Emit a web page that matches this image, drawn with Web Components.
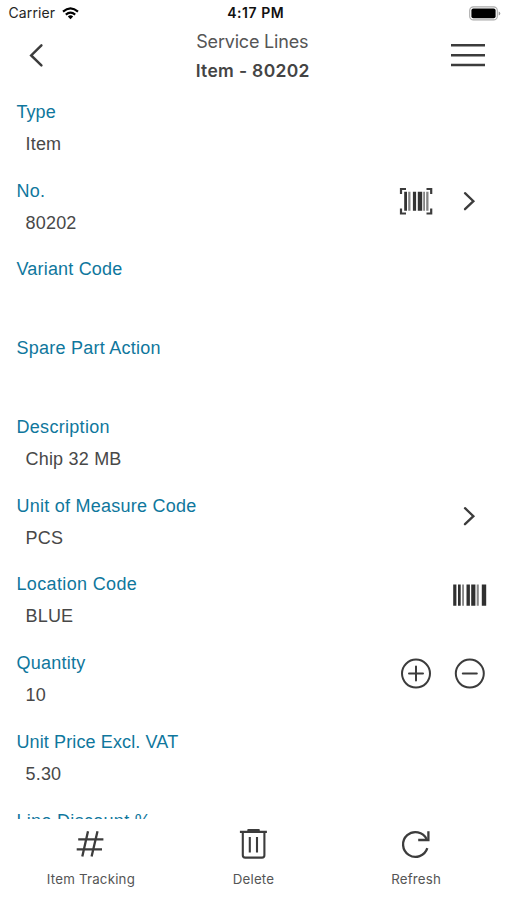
<!DOCTYPE html>
<html lang="en">
<head>
<meta charset="utf-8">
<title>Service Lines</title>
<style>
html,body{margin:0;padding:0;background:#fff}
body{width:507px;height:900px;overflow:hidden;font-family:"Liberation Sans",Arial,sans-serif;color:#454545}
</style>
</head>
<body>
<app-screen>
  <status-bar slot="top"></status-bar>
  <nav-bar slot="top"><span slot="title">Service Lines</span><span slot="subtitle">Item - 80202</span></nav-bar>
  <field-row label="Type" style="--ls:.05px">Item</field-row>
  <field-row label="No.">80202<app-icon slot="actions" name="scan"></app-icon><app-icon slot="actions" name="next"></app-icon></field-row>
  <field-row label="Variant Code" style="--ls:.18px"></field-row>
  <field-row label="Spare Part Action"></field-row>
  <field-row label="Description" style="--ls:.3px">Chip 32 MB</field-row>
  <field-row label="Unit of Measure Code">PCS<app-icon slot="actions" name="next"></app-icon></field-row>
  <field-row label="Location Code" style="--ls:.35px">BLUE<app-icon slot="actions" name="barcode"></app-icon></field-row>
  <field-row label="Quantity">10<app-icon slot="actions" name="plus"></app-icon><app-icon slot="actions" name="minus"></app-icon></field-row>
  <field-row label="Unit Price Excl. VAT" style="--ls:.12px">5.30</field-row>
  <field-row label="Line Discount %" style="--ls:.3px"></field-row>
  <tool-bar slot="bottom">
    <tool-button icon="hash">Item Tracking</tool-button>
    <tool-button icon="trash">Delete</tool-button>
    <tool-button icon="refresh">Refresh</tool-button>
  </tool-bar>
</app-screen>
<script>
const define = (name, html, init) => customElements.define(name, class extends HTMLElement {
  constructor() {
    super();
    this.attachShadow({ mode: 'open' }).innerHTML = html;
  }
  connectedCallback() { if (init) init(this, this.shadowRoot); }
});

const stroke = 'fill="none" stroke="#3c3c3c"';
const icons = {
  back: `<svg width="36" height="36" viewBox="0 0 36 36"><path d="M23.4 8.4 L13.2 18.4 L23.4 28.4" ${stroke} stroke-width="2.5" stroke-linecap="round"/></svg>`,
  menu: `<svg width="36" height="36" viewBox="0 0 36 36"><path d="M1 8.2H35M1 18.2H35M1 28H35" ${stroke} stroke-width="2.5"/></svg>`,
  next: `<svg width="36" height="36" viewBox="0 0 36 36"><path d="M13 10.2 L21.4 18.2 L13 26.2" ${stroke} stroke-width="2.3" stroke-linecap="round"/></svg>`,
  plus: `<svg width="36" height="36" viewBox="0 0 36 36"><g ${stroke} stroke-width="2"><circle cx="18" cy="18.6" r="14"/><path d="M11 18.6H25M18 11.6V25.6" stroke-linecap="round"/></g></svg>`,
  minus: `<svg width="36" height="36" viewBox="0 0 36 36"><g ${stroke} stroke-width="2"><circle cx="17.8" cy="18.6" r="14"/><path d="M10.8 18.6H24.8" stroke-linecap="round"/></g></svg>`,
  scan: `<svg width="36" height="36" viewBox="0 0 36 36"><path d="M3 11V6H8M28.5 6H33.2V11M33.2 25.5V30.5H28.5M8 30.5H3V25.5" ${stroke} stroke-width="2.2"/><g fill="#333"><path d="M6.2 8.7h2.8v19H6.2zM14.9 8.7h3.2v19h-3.2zM19.8 8.7h4.4v19h-4.4z"/><path fill="#858585" d="M10.2 8.7h2.3v19h-2.3zM25.2 8.7h1.8v19h-1.8zM28.2 8.7h2.3v19h-2.3z"/></g></svg>`,
  barcode: `<svg width="36" height="36" viewBox="0 0 36 36"><g fill="#303030"><path d="M1.2 7.6h3.2v21.2H1.2zM6 7.6h2.7v21.2H6zM14.5 7.6h3.4v21.2h-3.4zM19.2 7.6h4.2v21.2h-4.2zM29.8 7.6h4.4v21.2h-4.4z"/><path fill="#888" d="M10.1 7.6h1.9v21.2h-1.9zM24.7 7.6h2.1v21.2h-2.1z"/></g></svg>`,
  hash: `<svg width="36" height="36" viewBox="0 0 36 36"><path d="M16 5.3 L10.3 30.5M25.5 5.3 L19.6 30.5M6.2 13.4H31.4M4.7 23.3H30" ${stroke} stroke-width="2.3"/></svg>`,
  trash: `<svg width="36" height="36" viewBox="0 0 36 36"><g ${stroke} stroke-width="2.1"><path d="M4.9 5.9H31.9M7.8 6V29.3Q7.8 31.6 10.2 31.6H27Q29.4 31.6 29.4 29.3V6M14.8 11V26.5M22 11V26.5"/><path d="M13.3 4.2H23.8" stroke-width="2.2" stroke-linecap="round"/></g></svg>`,
  refresh: `<svg width="36" height="36" viewBox="0 0 36 36"><path d="M30.3 22.2A12.4 12.4 0 1 1 29.6 13" ${stroke} stroke-width="2.3"/><path d="M31.4 5.2V14H21.2" ${stroke} stroke-width="2.3"/></svg>`,
};

define('app-icon', `<style>:host{display:block;width:36px;height:36px;flex:none}svg{display:block}</style><div></div>`,
  (el, root) => { root.querySelector('div').innerHTML = icons[el.getAttribute('name')]; });

define('status-bar', `<style>
  :host{display:grid;grid-template-columns:1fr auto 1fr;align-items:center;height:26px;padding:0 6px 0 8.5px;box-sizing:border-box;font:14px/26px Inter,sans-serif;color:#252525}
  .carrier{display:flex;align-items:center;gap:7px}
  .carrier span{font-size:14px;letter-spacing:.1px}
  .time{font-size:14px;font-weight:600;letter-spacing:.55px;color:#111;padding-left:2px}
  .battery{justify-self:end}
  svg{display:block}
</style>
<div class="carrier"><span>Carrier</span><svg width="17" height="13" viewBox="0 0 17 13"><g fill="none" stroke="#000" stroke-width="2.1"><path d="M1 4.6Q8.5 -2 16 4.6"/><path d="M3.8 7.6Q8.5 3.5 13.2 7.6"/></g><path d="M5.8 9.4Q8.5 7.3 11.2 9.4L8.5 12.2Z"/></svg></div>
<div class="time">4:17 PM</div>
<svg class="battery" width="32" height="15" viewBox="0 0 32 15"><rect x=".7" y=".9" width="27.6" height="13" rx="3.7" fill="#fff" stroke="#aaa" stroke-width="1.1"/><rect x="2.4" y="2.5" width="24.2" height="9.8" rx="2" fill="#000"/><path d="M29.7 5.4Q31.3 6 31.3 7.4T29.7 9.4Z" fill="#999"/></svg>`);

define('nav-bar', `<style>
  :host{display:flex;justify-content:space-between;padding:0 20.5px 0 18px;height:66px;box-sizing:border-box;font-family:Inter,sans-serif;text-align:center}
  app-icon{margin-top:11px}
  .titles{display:flex;flex-direction:column;padding-top:1px}
  .t{font-size:18px;line-height:29px;letter-spacing:-.2px;color:#555}
  .s{font-size:17.5px;line-height:30px;font-weight:600;letter-spacing:.33px;color:#444;padding-left:1px}
</style>
<app-icon name="back"></app-icon>
<div class="titles"><div class="t"><slot name="title"></slot></div><div class="s"><slot name="subtitle"></slot></div></div>
<app-icon name="menu"></app-icon>`);

define('field-row', `<style>
  :host{display:flex;justify-content:space-between;height:78.75px;box-sizing:border-box;padding:9.8px 19.2px 0 16.5px;font-size:18px;flex:none}
  .label{line-height:20px;color:#0f779d;letter-spacing:var(--ls,.25px)}
  .value{line-height:20px;padding:12px 0 0 9px;letter-spacing:.2px;color:#484848}
  .actions{display:flex;gap:18px;padding-top:2.3px}
</style>
<div><div class="label"></div><div class="value"><slot></slot></div></div>
<div class="actions"><slot name="actions"></slot></div>`,
  (el, root) => { root.querySelector('.label').textContent = el.getAttribute('label'); });

define('tool-button', `<style>
  :host{display:flex;flex-direction:column;align-items:center;width:162.6px;flex:none;font:13.3px/20px Inter,sans-serif;letter-spacing:.2px;color:#555}
  app-icon{margin-right:2px}
  .caption{margin-top:7px}
</style><div class="caption"><slot></slot></div>`,
  (el, root) => {
    const icon = document.createElement('app-icon');
    icon.setAttribute('name', el.getAttribute('icon'));
    root.querySelector('.caption').before(icon);
  });

define('tool-bar', `<style>:host{display:flex;justify-content:center;height:81.5px;box-sizing:border-box;padding-top:7.5px;background:#fff}</style><slot></slot>`);

define('app-screen', `<style>
  :host{display:flex;flex-direction:column;width:507px;height:900px;background:#fff;overflow:hidden}
  .body{flex:1;min-height:0;overflow:hidden}
</style><slot name="top"></slot><div class="body"><slot></slot></div><slot name="bottom"></slot>`);
</script>
</body>
</html>
